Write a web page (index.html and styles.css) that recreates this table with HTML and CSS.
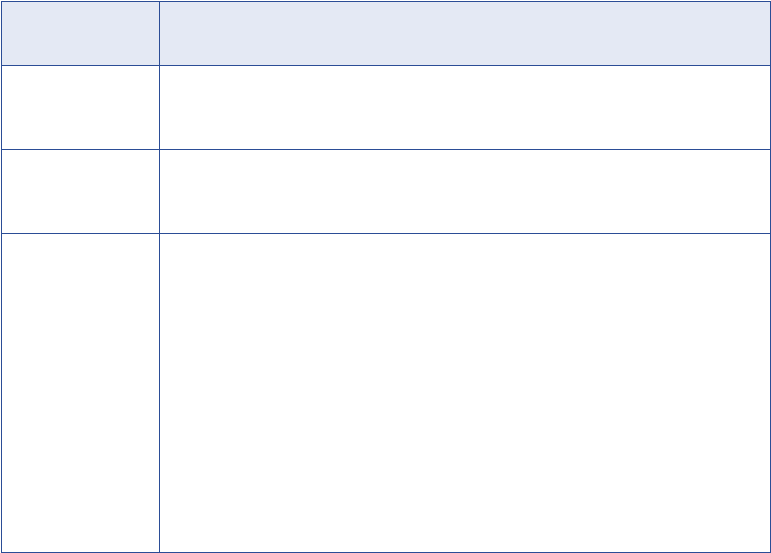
FILE: index.html
```html
<!DOCTYPE html>
<html>
<head>
<meta charset="utf-8">
<link rel="stylesheet" href="styles.css">
</head>
<body>
<div class="table">
  <div class="cell head"></div>
  <div class="cell head"></div>
  <div class="cell"></div>
  <div class="cell"></div>
  <div class="cell"></div>
  <div class="cell"></div>
  <div class="cell"></div>
  <div class="cell"></div>
</div>
</body>
</html>
```
FILE: styles.css
```css
html, body {
  margin: 0;
  background: #ffffff;
  font-family: "Liberation Sans", Arial, sans-serif;
}
body {
  padding: 1px 0 0 1px;
}
.table {
  display: grid;
  grid-template-columns: 157px 610px;
  grid-template-rows: 63px 83px 83px 318px;
  gap: 1px;
  padding: 1px;
  width: max-content;
  background: #2b4d96;
}
.cell {
  background: #ffffff;
}
.cell.head {
  background: #e4e9f4;
}
```
